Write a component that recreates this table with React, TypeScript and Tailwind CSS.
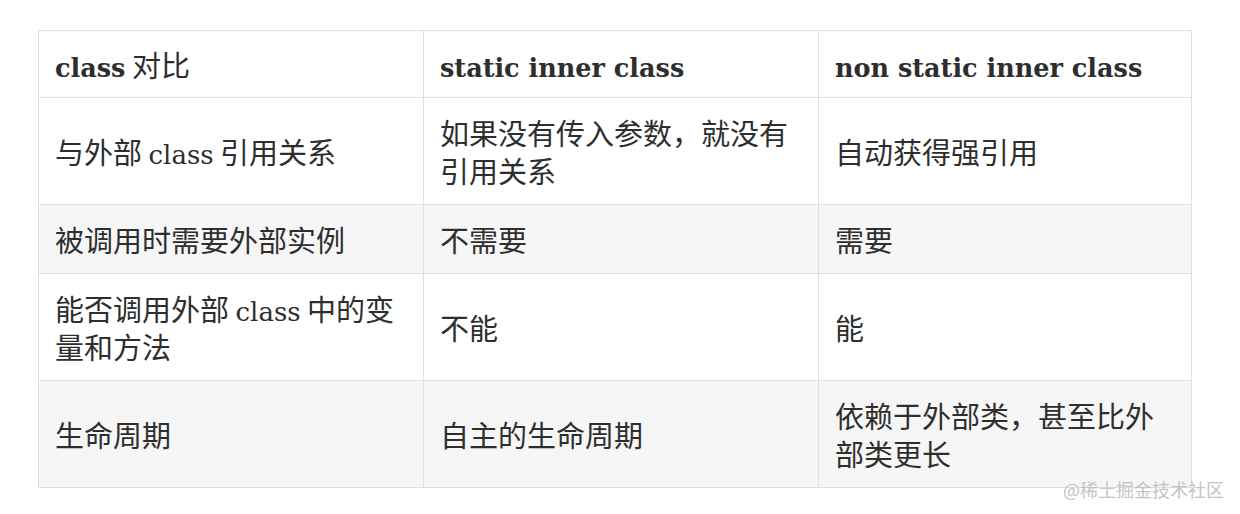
import React from "react";

const L = ({ children, bold }: { children: React.ReactNode; bold?: boolean }) => (
  <span
    className={
      (bold ? "text-[25.5px] font-bold" : "text-[26px]") +
      " leading-none [font-family:'DejaVu_Serif',serif]"
    }
  >
    {children}
  </span>
);

type Row = { cells: React.ReactNode[]; gray: boolean };

const rows: Row[] = [
  {
    gray: false,
    cells: [
      <>与外部 <L>class</L> 引用关系</>,
      <>如果没有传入参数，就没有引用关系</>,
      <>自动获得强引用</>,
    ],
  },
  {
    gray: true,
    cells: [<>被调用时需要外部实例</>, <>不需要</>, <>需要</>],
  },
  {
    gray: false,
    cells: [
      <>能否调用外部 <L>class</L> 中的变量和方法</>,
      <>不能</>,
      <>能</>,
    ],
  },
  {
    gray: true,
    cells: [
      <>生命周期</>,
      <>自主的生命周期</>,
      <>依赖于外部类，甚至比外部类更长</>,
    ],
  },
];

export default function App() {
  return (
    <div className="relative w-[1240px] h-[514px] bg-white overflow-hidden pt-[30px] pl-[38px] text-[#2e2e2e] [font-family:'Noto_Sans_CJK_SC',sans-serif]">
      <table className="border-collapse table-fixed w-[1153px] text-[29px] leading-[38px]">
        <colgroup>
          <col className="w-[385px]" />
          <col className="w-[395px]" />
          <col className="w-[373px]" />
        </colgroup>
        <thead>
          <tr className="bg-white">
            <th className="border border-[#dfdfdf] px-4 py-[14px] text-left align-middle font-normal">
              <L bold>class</L> 对比
            </th>
            <th className="border border-[#dfdfdf] px-4 py-[14px] text-left align-middle font-normal">
              <L bold>static inner class</L>
            </th>
            <th className="border border-[#dfdfdf] px-4 py-[14px] text-left align-middle font-normal">
              <L bold>non static inner class</L>
            </th>
          </tr>
        </thead>
        <tbody>
          {rows.map((r, i) => (
            <tr key={i} className={r.gray ? "bg-[#f6f6f6]" : "bg-white"}>
              {r.cells.map((c, j) => (
                <td
                  key={j}
                  className="border border-[#dfdfdf] px-4 py-[15px] align-middle"
                >
                  {c}
                </td>
              ))}
            </tr>
          ))}
        </tbody>
      </table>
      <div className="absolute left-[1063px] top-[478px] text-[18px] leading-[22px] text-[#c4c4c4] [font-family:'Noto_Sans_CJK_SC',sans-serif] whitespace-nowrap">
        @稀土掘金技术社区
      </div>
    </div>
  );
}
